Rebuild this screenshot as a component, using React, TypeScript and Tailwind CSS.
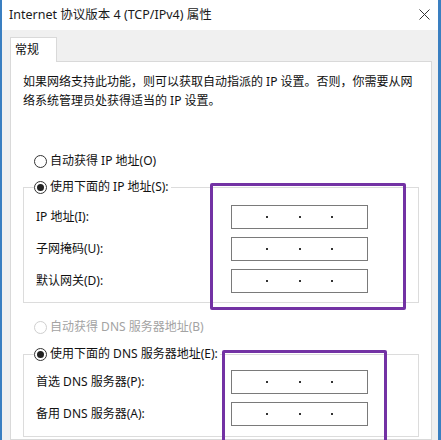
import React from 'react';

type RadioProps = { label: string; checked?: boolean; disabled?: boolean };

function Radio({ label, checked = false, disabled = false }: RadioProps) {
  return (
    <span className={`flex h-[20px] items-center gap-[3px] ${disabled ? 'text-[#a3a3a3]' : 'text-[#111]'}`}>
      <span
        className={`flex h-[13px] w-[13px] items-center justify-center rounded-full border bg-white ${
          disabled ? 'border-[#cfcfcf]' : 'border-[#333]'
        }`}
      >
        {checked ? <span className="h-[7px] w-[7px] rounded-full bg-[#222]" /> : null}
      </span>
      {label}
    </span>
  );
}

function IpInput() {
  return (
    <div className="flex h-[24px] w-[137px] items-center border border-[#7a7a7a] bg-white px-[4px]">
      <span className="flex-1" />
      <span className="h-[2px] w-[2px] bg-[#333]" />
      <span className="flex-1" />
      <span className="h-[2px] w-[2px] bg-[#333]" />
      <span className="flex-1" />
      <span className="h-[2px] w-[2px] bg-[#333]" />
      <span className="flex-1" />
    </div>
  );
}

function FieldRow({ label }: { label: string }) {
  return (
    <div className="flex items-center">
      <span className="w-[195px]">{label}</span>
      <IpInput />
    </div>
  );
}

export default function App() {
  return (
    <div className="relative flex h-[440px] w-[441px] flex-col overflow-hidden border-l-2 border-r-[3px] border-[#3a7fc1] bg-[#f0f0f0] font-['Noto_Sans','Noto_Sans_CJK_SC',sans-serif] text-[12px] leading-[20px] text-[#111]">
      {/* title bar */}
      <div className="flex h-[30px] shrink-0 items-center justify-between bg-white pl-[7px] pr-[8px] text-[12.5px] text-[#1a1a1a]">
        <span>Internet 协议版本 4 (TCP/IPv4) 属性</span>
        <svg width="11" height="11" viewBox="0 0 11 11" className="mb-[2px]">
          <path d="M0.5 0.5 L10.5 10.5 M10.5 0.5 L0.5 10.5" stroke="#333" strokeWidth="1" />
        </svg>
      </div>

      {/* tab strip */}
      <div className="ml-[8px] mt-[7px] flex">
        <div className="relative z-10 -mb-px flex h-[25px] w-[47px] items-center border border-b-0 border-[#d9d9d9] bg-white pl-[4px]">
          常规
        </div>
      </div>

      {/* tab panel */}
      <div className="ml-[8px] w-[422px] flex-1 border border-[#d9d9d9] bg-white">
        <p className="ml-[12px] mt-[10px] w-[400px] leading-[19px]">
          如果网络支持此功能，则可以获取自动指派的 IP 设置。否则，你需要从网
          <br />
          络系统管理员处获得适当的 IP 设置。
        </p>

        <div className="ml-[23px] mt-[41px]">
          <Radio label="自动获得 IP 地址(O)" />
        </div>

        <fieldset className="ml-[12px] mt-[6px] w-[396px] border border-[#dcdcdc]">
          <legend className="ml-[10px] pr-[2px]">
            <Radio label="使用下面的 IP 地址(S):" checked />
          </legend>
          <div className="flex flex-col gap-[8px] pb-[9px] pl-[12px] pt-[8px]">
            <FieldRow label="IP 地址(I):" />
            <FieldRow label="子网掩码(U):" />
            <FieldRow label="默认网关(D):" />
          </div>
        </fieldset>

        <div className="ml-[23px] mt-[14px]">
          <Radio label="自动获得 DNS 服务器地址(B)" disabled />
        </div>

        <fieldset className="ml-[12px] mt-[7px] w-[396px] border border-[#dcdcdc]">
          <legend className="ml-[10px] pr-[2px]">
            <Radio label="使用下面的 DNS 服务器地址(E):" checked />
          </legend>
          <div className="flex flex-col gap-[8px] pb-[10px] pl-[12px] pt-[6px]">
            <FieldRow label="首选 DNS 服务器(P):" />
            <FieldRow label="备用 DNS 服务器(A):" />
          </div>
        </fieldset>
      </div>

      {/* highlight frames drawn over the address fields */}
      <div className="absolute left-[208px] top-[183px] h-[127px] w-[196px] rounded-[2px] border-[3px] border-[#7332a4]" />
      <div className="absolute left-[220px] top-[350px] h-[110px] w-[165px] rounded-[2px] border-[3px] border-[#7332a4]" />
    </div>
  );
}
